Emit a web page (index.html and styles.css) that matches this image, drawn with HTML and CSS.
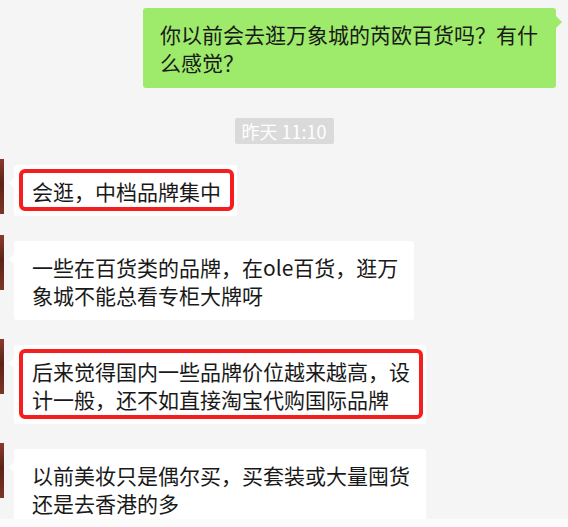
FILE: index.html
```html
<!DOCTYPE html>
<html lang="zh-CN">
<head>
    <meta charset="UTF-8">
    <meta name="viewport" content="width=device-width, initial-scale=1.0">
    <title>聊天记录</title>
    <link rel="stylesheet" href="styles.css">
</head>
<body>

    <div class="chat">
        <!-- 我发的消息 -->
        <div class="row row-me">
            <div class="bubble bubble-me">你以前会去逛万象城的芮欧百货吗？有什<br>么感觉？</div>
        </div>

        <div class="time-row">
            <span class="time">昨天 11:10</span>
        </div>

        <!-- 对方的消息 -->
        <div class="row">
            <div class="avatar"></div>
            <div class="bubble marked">会逛，中档品牌集中</div>
        </div>

        <div class="row">
            <div class="avatar"></div>
            <div class="bubble">一些在百货类的品牌，在ole百货，逛万<br>象城不能总看专柜大牌呀</div>
        </div>

        <div class="row">
            <div class="avatar"></div>
            <div class="bubble marked">后来觉得国内一些品牌价位越来越高，设<br>计一般，还不如直接淘宝代购国际品牌</div>
        </div>

        <div class="row">
            <div class="avatar"></div>
            <div class="bubble">以前美妆只是偶尔买，买套装或大量囤货<br>还是去香港的多</div>
        </div>
    </div>

    <div class="bottom-bar"></div>

</body>
</html>
```

FILE: styles.css
```css
/* 全局 */
body {
    margin: 0;
    padding: 0;
    background-color: #f5f5f5;
    font-family: 'Noto Sans CJK SC', 'Noto Sans', sans-serif;
    color: #191919;
}

.chat {
    height: 519px;
    overflow: hidden;
    padding-top: 8px;
    box-sizing: border-box;
}

.row {
    display: flex;
    align-items: flex-start;
    margin-bottom: 25px;
}

.row-me {
    justify-content: flex-end;
    padding-right: 12px;
    margin-bottom: 30px;
}

/* 头像只露出一条边 */
.avatar {
    width: 4px;
    height: 55px;
    margin-top: -6px;
    flex-shrink: 0;
    background: linear-gradient(180deg, #8a3a2c 0%, #5e2218 45%, #7b3526 100%);
}

.bubble {
    position: relative;
    width: fit-content;
    white-space: nowrap;
    margin-left: 10px;
    padding: 12px 16px 11px 18px;
    background-color: #ffffff;
    border-radius: 3px;
    font-size: 21px;
    line-height: 28px;
}

.bubble::before {
    content: "";
    position: absolute;
    left: -5px;
    top: 13px;
    border-top: 5px solid transparent;
    border-bottom: 5px solid transparent;
    border-right: 5px solid #ffffff;
}

.bubble-me {
    margin-left: 0;
    padding: 12px 18px 12px 17px;
    background-color: #9eea6a;
}

.bubble-me::before {
    left: auto;
    right: -6px;
    top: 8px;
    border-top: 6px solid transparent;
    border-bottom: 6px solid transparent;
    border-right: none;
    border-left: 6px solid #9eea6a;
}

/* 红框标注 */
.marked::after {
    content: "";
    position: absolute;
    top: 4px;
    left: 5px;
    right: 3px;
    bottom: 5px;
    border: 4px solid #f51d1d;
    border-radius: 6px;
}

.time-row {
    text-align: center;
    margin-bottom: 21px;
}

.time {
    display: inline-block;
    padding: 0 7px;
    height: 26px;
    line-height: 26px;
    background-color: #dadada;
    color: #ffffff;
    font-size: 18px;
    border-radius: 2px;
}

.bottom-bar {
    height: 8px;
    background-color: #fbfbfb;
}
```
